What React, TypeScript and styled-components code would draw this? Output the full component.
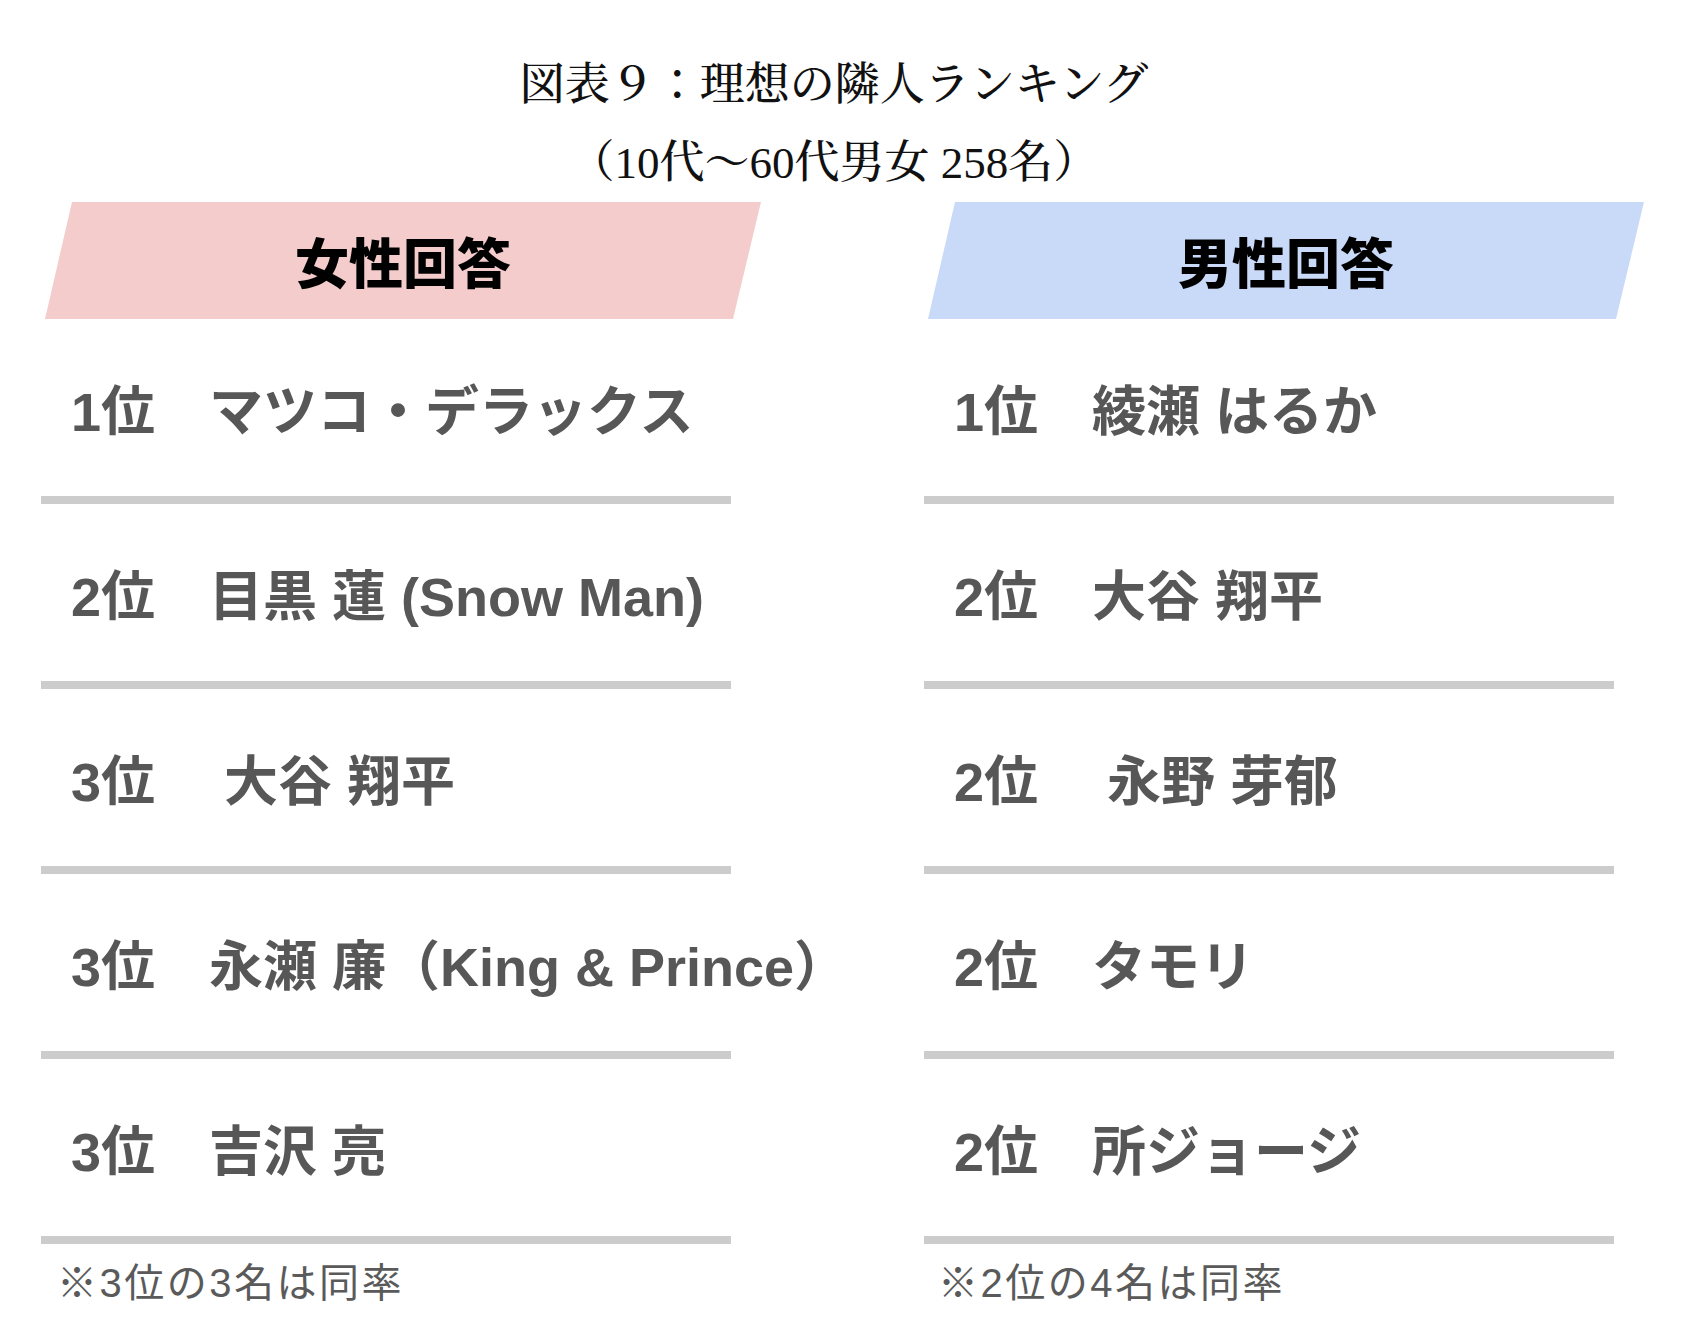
import React from "react";
import styled, { createGlobalStyle } from "styled-components";

const GlobalStyle = createGlobalStyle`
  html, body {
    margin: 0;
    padding: 0;
    background: #ffffff;
  }
`;

const Page = styled.div`
  width: 1690px;
  min-height: 1317px;
  background: #ffffff;
  font-family: "Liberation Sans", "Noto Sans CJK JP", sans-serif;
`;

const TitleBlock = styled.header`
  padding-top: 46px;
  padding-right: 22px;
  text-align: center;
  color: #111111;
  font-family: "Liberation Serif", "Noto Serif CJK JP", "IPAexMincho",
    "IPAMincho", "Noto Sans CJK JP", serif;
  font-size: 45px;
  font-weight: 500;
  line-height: 78px;
`;

const TitleLine = styled.div`
  white-space: nowrap;
`;

const Columns = styled.div`
  display: grid;
  grid-template-columns: 720px 720px;
  column-gap: 163px;
  padding-left: 41px;
`;

const Column = styled.section`
  display: flex;
  flex-direction: column;
`;

const Banner = styled.div<{ $tone: "pink" | "blue" }>`
  height: 117px;
  display: flex;
  align-items: center;
  justify-content: center;
  padding-left: 4px;
  background: ${(p) => (p.$tone === "pink" ? "#f4cccc" : "#c9daf8")};
  clip-path: polygon(31px 0, 100% 0, calc(100% - 28px) 100%, 4px 100%);
  color: #000000;
  font-family: "Noto Sans CJK JP", sans-serif;
  font-size: 54px;
  font-weight: 900;
`;

const Row = styled.div`
  width: 660px;
  height: 177px;
  display: flex;
  align-items: center;
  padding-left: 30px;
  border-bottom: 8px solid #cccccc;
  color: #575757;
  font-family: "Liberation Sans", "Noto Sans CJK JP", sans-serif;
  font-size: 54px;
  font-weight: 700;
  white-space: pre;
`;

const RowText = styled.span`
  display: block;
  width: 0;
  overflow: visible;
`;

const Note = styled.p<{ $inset: number }>`
  margin: 0;
  padding-top: 17px;
  padding-left: ${(p) => p.$inset}px;
  color: #5a5a5a;
  font-family: "Liberation Sans", "Noto Sans CJK JP", sans-serif;
  font-size: 40px;
  font-weight: 400;
  letter-spacing: 2.5px;
  line-height: 44px;
  white-space: nowrap;
`;

interface RankingProps {
  title: string;
  tone: "pink" | "blue";
  items: string[];
  note: string;
  noteInset: number;
}

const Ranking: React.FC<RankingProps> = ({
  title,
  tone,
  items,
  note,
  noteInset,
}) => (
  <Column>
    <Banner $tone={tone}>{title}</Banner>
    {items.map((item, i) => (
      <Row key={i}>
        <RowText>{item}</RowText>
      </Row>
    ))}
    <Note $inset={noteInset}>{note}</Note>
  </Column>
);

const female = [
  "1位　マツコ・デラックス",
  "2位　目黒 蓮 (Snow Man)",
  "3位　 大谷 翔平",
  "3位　永瀬 廉（King & Prince）",
  "3位　吉沢 亮",
];

const male = [
  "1位　綾瀬 はるか",
  "2位　大谷 翔平",
  "2位　 永野 芽郁",
  "2位　タモリ",
  "2位　所ジョージ",
];

export default function App() {
  return (
    <Page>
      <GlobalStyle />
      <TitleBlock>
        <TitleLine>図表９：理想の隣人ランキング</TitleLine>
        <TitleLine>（10代～60代男女 258名）</TitleLine>
      </TitleBlock>
      <Columns>
        <Ranking
          title="女性回答"
          tone="pink"
          items={female}
          note="※3位の3名は同率"
          noteInset={16}
        />
        <Ranking
          title="男性回答"
          tone="blue"
          items={male}
          note="※2位の4名は同率"
          noteInset={14}
        />
      </Columns>
    </Page>
  );
}
